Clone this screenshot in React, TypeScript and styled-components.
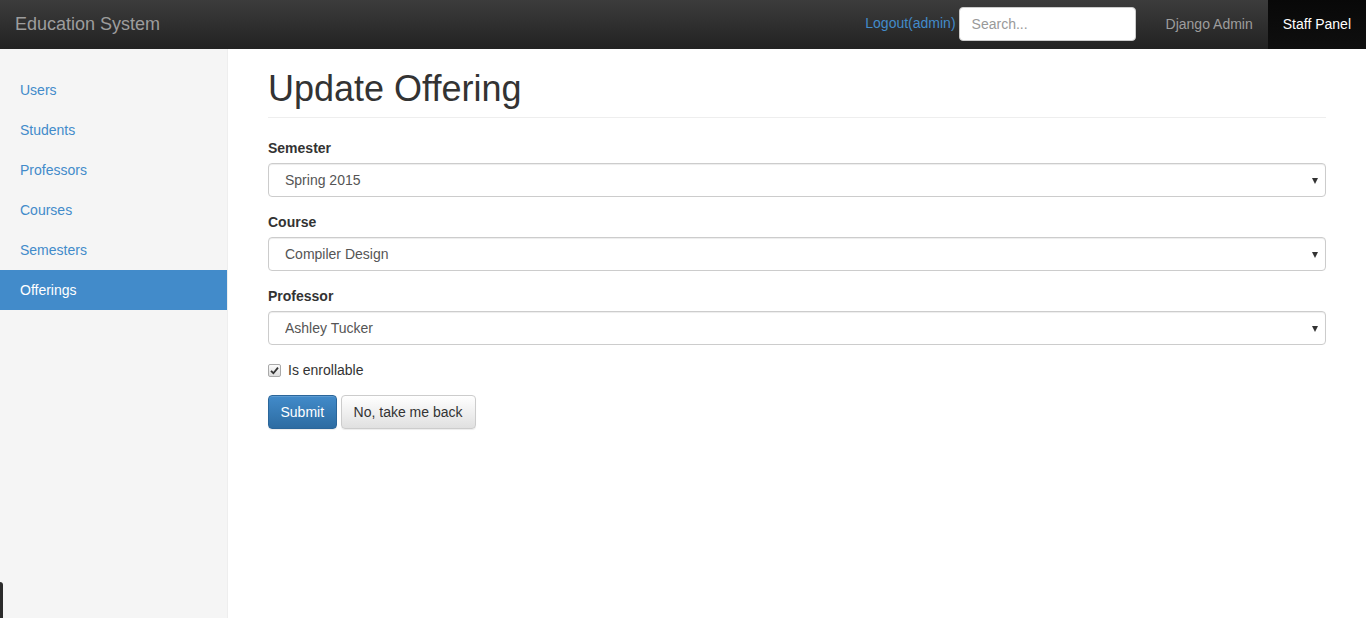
import React from "react";
import styled, { createGlobalStyle } from "styled-components";

const Global = createGlobalStyle`
  html, body { margin: 0; padding: 0; }
  body {
    font-family: "Liberation Sans", Arial, Helvetica, sans-serif;
    font-size: 14px;
    line-height: 1.428571;
    color: #333;
    background: #fff;
  }
  * { box-sizing: border-box; }
`;

const Page = styled.div`
  display: flex;
  flex-direction: column;
  min-height: 618px;
`;

const Navbar = styled.header`
  height: 49px;
  display: flex;
  align-items: stretch;
  background: linear-gradient(to bottom, #3c3c3c 0%, #222 100%);
`;

const Brand = styled.a`
  padding: 1px 15px 0;
  display: flex;
  align-items: center;
  font-size: 18px;
  color: #9d9d9d;
  text-decoration: none;
`;

const NavRight = styled.div`
  margin-left: auto;
  display: flex;
  align-items: center;
`;

const Logout = styled.a`
  color: #428bca;
  text-decoration: none;
  margin-right: 3px;
  padding-bottom: 1px;
`;

const Search = styled.input`
  width: 177px;
  height: 34px;
  border: 1px solid #ccc;
  border-radius: 4px;
  padding: 6px 12px;
  font-family: inherit;
  font-size: 14px;
  color: #555;
  background: #fff;
  margin-right: 15px;
  margin-bottom: 1px;
  &::placeholder { color: #999; }
`;

const NavItem = styled.a<{ $active?: boolean }>`
  height: 49px;
  display: flex;
  align-items: center;
  padding: 0 15px;
  text-decoration: none;
  color: ${(p) => (p.$active ? "#fff" : "#9d9d9d")};
  background: ${(p) => (p.$active ? "linear-gradient(to bottom, #080808 0%, #0f0f0f 100%)" : "transparent")};
`;

const Body = styled.div`
  flex: 1;
  display: flex;
`;

const Sidebar = styled.nav`
  width: 228px;
  flex: none;
  background: #f5f5f5;
  border-right: 1px solid #eee;
  padding-top: 21px;
  display: flex;
  flex-direction: column;
`;

const SideLink = styled.a<{ $active?: boolean }>`
  display: block;
  height: 40px;
  line-height: 20px;
  padding: 10px 20px;
  text-decoration: none;
  color: ${(p) => (p.$active ? "#fff" : "#428bca")};
  background: ${(p) => (p.$active ? "#428bca" : "transparent")};
`;

const Main = styled.main`
  flex: 1;
  padding: 20px 40px 0;
`;

const PageHeader = styled.div`
  border-bottom: 1px solid #eee;
  padding-bottom: 8px;
  margin-bottom: 20px;
`;

const Title = styled.h1`
  margin: 0;
  font-size: 36px;
  font-weight: 500;
  line-height: 1.1;
  color: #333;
`;

const FormGroup = styled.div`
  margin-bottom: 15px;
`;

const Label = styled.label`
  display: block;
  font-weight: bold;
  padding-top: 1px;
  margin-bottom: 4px;
`;

const SelectWrap = styled.div`
  position: relative;
`;

const Select = styled.select`
  appearance: none;
  -webkit-appearance: none;
  width: 100%;
  height: 34px;
  border: 1px solid #ccc;
  border-radius: 4px;
  background: #fff;
  padding: 6px 12px 6px 16px;
  font-family: inherit;
  font-size: 14px;
  color: #555;
  box-shadow: inset 0 1px 1px rgba(0,0,0,0.075);
`;

const Arrow = styled.span`
  position: absolute;
  right: 8px;
  top: 15px;
  width: 0;
  height: 0;
  border-left: 3.5px solid transparent;
  border-right: 3.5px solid transparent;
  border-top: 6px solid #333;
  pointer-events: none;
`;

const CheckRow = styled.label`
  display: flex;
  align-items: center;
  height: 21px;
  padding-top: 1px;
  margin-bottom: 14px;
  gap: 7px;
`;

const CheckBox = styled.span`
  width: 13px;
  height: 13px;
  border: 1px solid #a9a9a9;
  border-radius: 2px;
  background: linear-gradient(to bottom, #fcfcfc, #dcdcdc);
  display: flex;
  align-items: center;
  justify-content: center;
`;

const Buttons = styled.div`
  display: flex;
  gap: 4px;
`;

const Button = styled.button<{ $primary?: boolean }>`
  height: 34px;
  padding: ${(p) => (p.$primary ? "6px 11.5px" : "6px 12px")};
  font-family: inherit;
  font-size: 14px;
  border-radius: 4px;
  cursor: pointer;
  color: ${(p) => (p.$primary ? "#fff" : "#333")};
  border: 1px solid ${(p) => (p.$primary ? "#2b669a" : "#ccc")};
  background: ${(p) =>
    p.$primary
      ? "linear-gradient(to bottom, #428bca 0%, #2d6ca2 100%)"
      : "linear-gradient(to bottom, #fff 0%, #e0e0e0 100%)"};
  box-shadow: inset 0 1px 0 rgba(255,255,255,0.15), 0 1px 1px rgba(0,0,0,0.075);
`;

const Handle = styled.div`
  position: fixed;
  left: 0;
  bottom: 0;
  width: 3px;
  height: 36px;
  background: #2b2b2b;
  border-top-right-radius: 3px;
`;

const navItems = ["Users", "Students", "Professors", "Courses", "Semesters", "Offerings"];

export default function App() {
  return (
    <Page>
      <Global />
      <Navbar>
        <Brand href="#">Education System</Brand>
        <NavRight>
          <Logout href="#">Logout(admin)</Logout>
          <Search placeholder="Search..." />
          <NavItem href="#">Django Admin</NavItem>
          <NavItem href="#" $active>Staff Panel</NavItem>
        </NavRight>
      </Navbar>
      <Body>
        <Sidebar>
          {navItems.map((n) => (
            <SideLink key={n} href="#" $active={n === "Offerings"}>{n}</SideLink>
          ))}
        </Sidebar>
        <Main>
          <PageHeader>
            <Title>Update Offering</Title>
          </PageHeader>
          <FormGroup>
            <Label>Semester</Label>
            <SelectWrap>
              <Select defaultValue="s"><option value="s">Spring 2015</option></Select>
              <Arrow />
            </SelectWrap>
          </FormGroup>
          <FormGroup>
            <Label>Course</Label>
            <SelectWrap>
              <Select defaultValue="c"><option value="c">Compiler Design</option></Select>
              <Arrow />
            </SelectWrap>
          </FormGroup>
          <FormGroup>
            <Label>Professor</Label>
            <SelectWrap>
              <Select defaultValue="p"><option value="p">Ashley Tucker</option></Select>
              <Arrow />
            </SelectWrap>
          </FormGroup>
          <CheckRow>
            <CheckBox>
              <svg width="9" height="9" viewBox="0 0 9 9">
                <path d="M1 4.8 L3.4 7.2 L8 1.6" fill="none" stroke="#333" strokeWidth="1.8" />
              </svg>
            </CheckBox>
            Is enrollable
          </CheckRow>
          <Buttons>
            <Button $primary>Submit</Button>
            <Button>No, take me back</Button>
          </Buttons>
        </Main>
      </Body>
      <Handle />
    </Page>
  );
}
